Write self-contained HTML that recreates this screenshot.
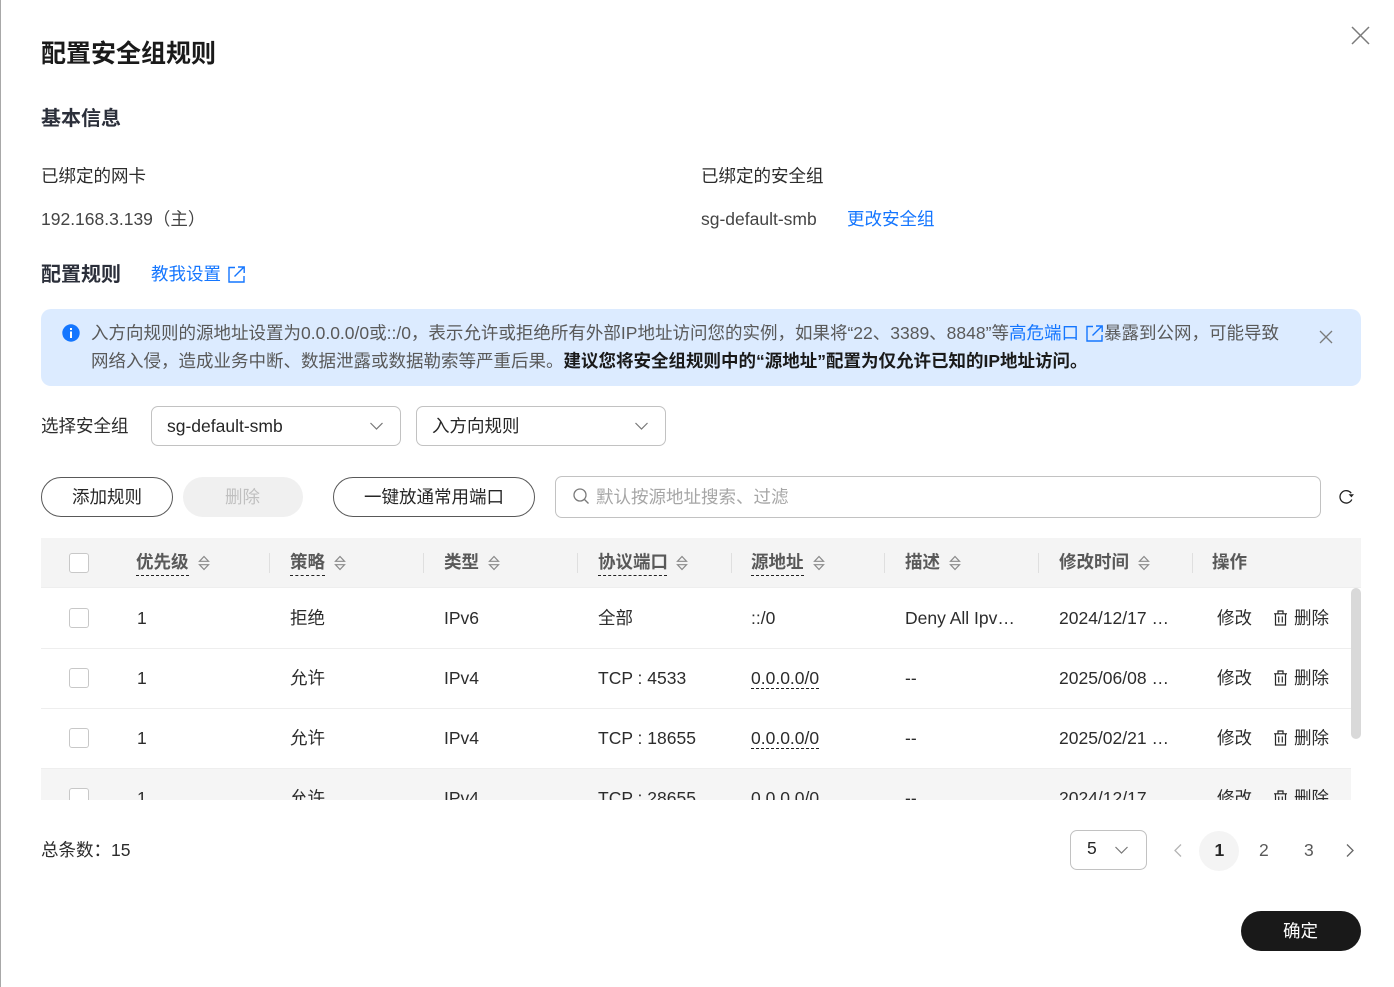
<!DOCTYPE html>
<html lang="zh"><head><meta charset="utf-8"><title>配置安全组规则</title>
<style>
*{box-sizing:border-box}
html,body{margin:0;padding:0;width:1394px;height:987px;overflow:hidden;background:#fff}
body{position:relative;font-family:"Liberation Sans","Noto Sans CJK SC",sans-serif;font-size:17.5px;color:#2c2c2c}
.t{position:absolute;line-height:24px;height:24px;white-space:nowrap}
.b{font-weight:700}
.a{color:#1476ff}
.box{position:absolute}
.h{color:#595959;font-weight:700;top:550px}
.du{position:absolute;top:575px;height:0;border-top:1px dashed #222}
.sep{position:absolute;top:553px;width:1px;height:20px;background:#dfdfdf}
.cb{position:absolute;left:69px;width:20px;height:20px;border:1px solid #c8c8c8;border-radius:3px;background:#fff}
.row{position:absolute;left:41px;width:1310px;height:1px;background:#eee}
svg{position:absolute;overflow:visible}
#clip{position:absolute;left:0;top:588px;width:1351px;height:212px;overflow:hidden}
#clip .t,#clip .cb,#clip svg,#clip .row,#clip .du{margin-top:-588px}
</style></head><body>
<div class="box" style="left:0;top:0;width:1px;height:987px;background:#a8a8a8"></div>

<div class="t b" style="left:41px;top:38px;font-size:25px;line-height:32px;height:32px;color:#1a1a1a">配置安全组规则</div>
<svg style="left:1351px;top:26px" width="19" height="19" viewBox="0 0 19 19" fill="none" stroke="#7b7b7b" stroke-width="1.5"><path d="M1 1L18 18M18 1L1 18"/></svg>

<div class="t b" style="left:41px;top:106px;font-size:20px;line-height:26px;height:26px;color:#2b2f3a">基本信息</div>
<div class="t" style="left:41px;top:164px">已绑定的网卡</div>
<div class="t" style="left:701px;top:164px">已绑定的安全组</div>
<div class="t" style="left:41px;top:207px;color:#444">192.168.3.139（主）</div>
<div class="t" style="left:701px;top:207px;color:#444">sg-default-smb</div>
<div class="t a" style="left:847px;top:207px">更改安全组</div>

<div class="t b" style="left:41px;top:262px;font-size:20px;line-height:26px;height:26px;color:#2b2f3a">配置规则</div>
<div class="t a" style="left:151px;top:262px">教我设置</div>
<svg style="left:228px;top:266px" width="17" height="17" viewBox="0 0 17 17" fill="none" stroke="#1476ff" stroke-width="1.4"><path d="M7 1.5H1v14.5h15V10M6.5 10.5L15.5 1.5M10 1h6.2v6"/></svg>

<!-- alert -->
<div class="box" style="left:41px;top:309px;width:1320px;height:77px;background:#dcebff;border-radius:10px"></div>
<svg style="left:62px;top:324px" width="18" height="18" viewBox="0 0 18 18"><circle cx="9" cy="9" r="8.7" fill="#1476ff"/><rect x="8" y="7.5" width="2" height="6.5" fill="#fff"/><rect x="8" y="4" width="2" height="2" fill="#fff"/></svg>
<div class="t" style="left:91px;top:321px;color:#595959">入方向规则的源地址设置为0.0.0.0/0或::/0，表示允许或拒绝所有外部IP地址访问您的实例，如果将“22、3389、8848”等<span class="a">高危端口</span></div>
<svg style="left:1086px;top:325px" width="17" height="17" viewBox="0 0 17 17" fill="none" stroke="#1476ff" stroke-width="1.4"><path d="M7 1.5H1v14.5h15V10M6.5 10.5L15.5 1.5M10 1h6.2v6"/></svg>
<div class="t" style="left:1104px;top:321px;color:#595959">暴露到公网，可能导致</div>
<div class="t" style="left:91px;top:349px;color:#595959">网络入侵，造成业务中断、数据泄露或数据勒索等严重后果。<span class="b" style="color:#1a1a1a">建议您将安全组规则中的“源地址”配置为仅允许已知的IP地址访问。</span></div>
<svg style="left:1320px;top:331px" width="12" height="12" viewBox="0 0 12 12" fill="none" stroke="#7b7b7b" stroke-width="1.3"><path d="M0 0L12 12M12 0L0 12"/></svg>

<!-- selects -->
<div class="t" style="left:41px;top:414px">选择安全组</div>
<div class="box" style="left:151px;top:406px;width:250px;height:40px;border:1px solid #c2c2c2;border-radius:7px"></div>
<div class="t" style="left:167px;top:414px;color:#262626">sg-default-smb</div>
<svg style="left:370px;top:422px" width="13" height="8" viewBox="0 0 13 8" fill="none" stroke="#777" stroke-width="1.2"><path d="M.5 1L6.5 7L12.5 1"/></svg>
<div class="box" style="left:416px;top:406px;width:250px;height:40px;border:1px solid #c2c2c2;border-radius:7px"></div>
<div class="t" style="left:432px;top:414px;color:#262626">入方向规则</div>
<svg style="left:635px;top:422px" width="13" height="8" viewBox="0 0 13 8" fill="none" stroke="#777" stroke-width="1.2"><path d="M.5 1L6.5 7L12.5 1"/></svg>

<!-- toolbar -->
<div class="box" style="left:41px;top:477px;width:132px;height:40px;border:1px solid #595959;border-radius:20px"></div>
<div class="t" style="left:72px;top:485px;color:#262626">添加规则</div>
<div class="box" style="left:183px;top:477px;width:120px;height:40px;background:#f0f0f0;border-radius:20px"></div>
<div class="t" style="left:225px;top:485px;color:#c0c0c0">删除</div>
<div class="box" style="left:333px;top:477px;width:202px;height:40px;border:1px solid #595959;border-radius:20px"></div>
<div class="t" style="left:364px;top:485px;color:#262626">一键放通常用端口</div>
<div class="box" style="left:555px;top:476px;width:766px;height:42px;border:1px solid #c2c2c2;border-radius:7px"></div>
<svg style="left:573px;top:488px" width="17" height="17" viewBox="0 0 17 17" fill="none" stroke="#7a7a7a" stroke-width="1.3"><circle cx="7" cy="7" r="6"/><path d="M11.5 11.5L15.5 15.5"/></svg>
<div class="t" style="left:596px;top:485px;color:#a6a6a6">默认按源地址搜索、过滤</div>
<svg style="left:1339px;top:490px" width="15" height="14" viewBox="0 0 15 14" fill="none" stroke="#222" stroke-width="1.3"><path d="M12.8 9.5A6.2 6.2 0 1 1 12.2 3.2"/><path d="M9.6 4.2L15 4.2L12.4 7.4Z" fill="#222" stroke="none"/></svg>

<!-- table head -->
<div class="box" style="left:41px;top:538px;width:1320px;height:49px;background:#f4f4f4"></div>
<div class="box" style="left:41px;top:587px;width:1320px;height:1px;background:#eee"></div>
<div class="cb" style="top:553px"></div>

<div class="t h" style="left:136px">优先级</div><div class="du" style="left:136px;width:53px"></div>
<svg style="left:198px;top:555px" width="12" height="16" viewBox="0 0 12 16" fill="none" stroke="#8a8a8a" stroke-width="1.2"><path d="M1.5 6.3L6 1.5L10.5 6.3ZM1.5 9.7L6 14.5L10.5 9.7Z"/></svg>
<div class="sep" style="left:269px"></div>
<div class="t h" style="left:290px">策略</div><div class="du" style="left:290px;width:35px"></div>
<svg style="left:334px;top:555px" width="12" height="16" viewBox="0 0 12 16" fill="none" stroke="#8a8a8a" stroke-width="1.2"><path d="M1.5 6.3L6 1.5L10.5 6.3ZM1.5 9.7L6 14.5L10.5 9.7Z"/></svg>
<div class="sep" style="left:423px"></div>
<div class="t h" style="left:444px">类型</div>
<svg style="left:488px;top:555px" width="12" height="16" viewBox="0 0 12 16" fill="none" stroke="#8a8a8a" stroke-width="1.2"><path d="M1.5 6.3L6 1.5L10.5 6.3ZM1.5 9.7L6 14.5L10.5 9.7Z"/></svg>
<div class="sep" style="left:577px"></div>
<div class="t h" style="left:598px">协议端口</div><div class="du" style="left:598px;width:69px"></div>
<svg style="left:676px;top:555px" width="12" height="16" viewBox="0 0 12 16" fill="none" stroke="#8a8a8a" stroke-width="1.2"><path d="M1.5 6.3L6 1.5L10.5 6.3ZM1.5 9.7L6 14.5L10.5 9.7Z"/></svg>
<div class="sep" style="left:731px"></div>
<div class="t h" style="left:751px">源地址</div><div class="du" style="left:751px;width:53px"></div>
<svg style="left:813px;top:555px" width="12" height="16" viewBox="0 0 12 16" fill="none" stroke="#8a8a8a" stroke-width="1.2"><path d="M1.5 6.3L6 1.5L10.5 6.3ZM1.5 9.7L6 14.5L10.5 9.7Z"/></svg>
<div class="sep" style="left:884px"></div>
<div class="t h" style="left:905px">描述</div>
<svg style="left:949px;top:555px" width="12" height="16" viewBox="0 0 12 16" fill="none" stroke="#8a8a8a" stroke-width="1.2"><path d="M1.5 6.3L6 1.5L10.5 6.3ZM1.5 9.7L6 14.5L10.5 9.7Z"/></svg>
<div class="sep" style="left:1038px"></div>
<div class="t h" style="left:1059px">修改时间</div>
<svg style="left:1138px;top:555px" width="12" height="16" viewBox="0 0 12 16" fill="none" stroke="#8a8a8a" stroke-width="1.2"><path d="M1.5 6.3L6 1.5L10.5 6.3ZM1.5 9.7L6 14.5L10.5 9.7Z"/></svg>
<div class="sep" style="left:1192px"></div>
<div class="t h" style="left:1212px">操作</div>

<!-- scrollbar -->
<div class="box" style="left:1351px;top:588px;width:10px;height:151px;background:#d9d9d9;border-radius:5px"></div>

<!-- rows -->
<div id="clip">
<div class="box" style="left:41px;top:181px;width:1310px;height:31px;background:#f5f5f5"></div>
<div class="row" style="top:648px"></div>
<div class="row" style="top:708px"></div>
<div class="row" style="top:768px"></div>

<div class="cb" style="top:608px"></div>
<div class="t" style="left:137px;top:606px">1</div>
<div class="t" style="left:290px;top:606px">拒绝</div>
<div class="t" style="left:444px;top:606px">IPv6</div>
<div class="t" style="left:598px;top:606px">全部</div>
<div class="t" style="left:751px;top:606px">::/0</div>
<div class="t" style="left:905px;top:606px">Deny All Ipv…</div>
<div class="t" style="left:1059px;top:606px">2024/12/17 …</div>
<div class="t" style="left:1217px;top:606px">修改</div>
<svg style="left:1274px;top:610px" width="13" height="16" viewBox="0 0 13 16" fill="none" stroke="#262626" stroke-width="1.2"><path d="M0 3.8H13M4 3.5V1H9V3.5M1.5 4V15H11.5V4M4.7 6.5V12.5M8.3 6.5V12.5"/></svg>
<div class="t" style="left:1294px;top:606px">删除</div>

<div class="cb" style="top:668px"></div>
<div class="t" style="left:137px;top:666px">1</div>
<div class="t" style="left:290px;top:666px">允许</div>
<div class="t" style="left:444px;top:666px">IPv4</div>
<div class="t" style="left:598px;top:666px">TCP : 4533</div>
<div class="t" style="left:751px;top:666px">0.0.0.0/0</div><div class="du" style="left:751px;top:688px;width:68px"></div>
<div class="t" style="left:905px;top:666px">--</div>
<div class="t" style="left:1059px;top:666px">2025/06/08 …</div>
<div class="t" style="left:1217px;top:666px">修改</div>
<svg style="left:1274px;top:670px" width="13" height="16" viewBox="0 0 13 16" fill="none" stroke="#262626" stroke-width="1.2"><path d="M0 3.8H13M4 3.5V1H9V3.5M1.5 4V15H11.5V4M4.7 6.5V12.5M8.3 6.5V12.5"/></svg>
<div class="t" style="left:1294px;top:666px">删除</div>

<div class="cb" style="top:728px"></div>
<div class="t" style="left:137px;top:726px">1</div>
<div class="t" style="left:290px;top:726px">允许</div>
<div class="t" style="left:444px;top:726px">IPv4</div>
<div class="t" style="left:598px;top:726px">TCP : 18655</div>
<div class="t" style="left:751px;top:726px">0.0.0.0/0</div><div class="du" style="left:751px;top:748px;width:68px"></div>
<div class="t" style="left:905px;top:726px">--</div>
<div class="t" style="left:1059px;top:726px">2025/02/21 …</div>
<div class="t" style="left:1217px;top:726px">修改</div>
<svg style="left:1274px;top:730px" width="13" height="16" viewBox="0 0 13 16" fill="none" stroke="#262626" stroke-width="1.2"><path d="M0 3.8H13M4 3.5V1H9V3.5M1.5 4V15H11.5V4M4.7 6.5V12.5M8.3 6.5V12.5"/></svg>
<div class="t" style="left:1294px;top:726px">删除</div>

<div class="cb" style="top:788px"></div>
<div class="t" style="left:137px;top:786px">1</div>
<div class="t" style="left:290px;top:786px">允许</div>
<div class="t" style="left:444px;top:786px">IPv4</div>
<div class="t" style="left:598px;top:786px">TCP : 28655</div>
<div class="t" style="left:751px;top:786px">0.0.0.0/0</div>
<div class="t" style="left:905px;top:786px">--</div>
<div class="t" style="left:1059px;top:786px">2024/12/17 …</div>
<div class="t" style="left:1217px;top:786px">修改</div>
<svg style="left:1274px;top:790px" width="13" height="16" viewBox="0 0 13 16" fill="none" stroke="#262626" stroke-width="1.2"><path d="M0 3.8H13M4 3.5V1H9V3.5M1.5 4V15H11.5V4M4.7 6.5V12.5M8.3 6.5V12.5"/></svg>
<div class="t" style="left:1294px;top:786px">删除</div>
</div>

<!-- footer -->
<div class="t" style="left:41px;top:838px">总条数：15</div>
<div class="box" style="left:1070px;top:830px;width:77px;height:40px;border:1px solid #c2c2c2;border-radius:7px"></div>
<div class="t" style="left:1087px;top:836px;color:#262626">5</div>
<svg style="left:1115px;top:846px" width="13" height="8" viewBox="0 0 13 8" fill="none" stroke="#777" stroke-width="1.2"><path d="M.5 1L6.5 7L12.5 1"/></svg>
<svg style="left:1174px;top:844px" width="8" height="13" viewBox="0 0 8 13" fill="none" stroke="#b5b5b5" stroke-width="1.3"><path d="M7 .5L1 6.5L7 12.5"/></svg>
<div class="box" style="left:1199px;top:831px;width:40px;height:40px;border-radius:50%;background:#f4f4f4"></div>
<div class="t b" style="left:1214.5px;top:838px;color:#262626">1</div>
<div class="t" style="left:1259px;top:838px;color:#595959">2</div>
<div class="t" style="left:1304px;top:838px;color:#595959">3</div>
<svg style="left:1346px;top:844px" width="8" height="13" viewBox="0 0 8 13" fill="none" stroke="#666" stroke-width="1.3"><path d="M1 .5L7 6.5L1 12.5"/></svg>

<div class="box" style="left:1241px;top:911px;width:120px;height:40px;background:#191919;border-radius:20px"></div>
<div class="t" style="left:1283px;top:919px;color:#fff">确定</div>
</body></html>
